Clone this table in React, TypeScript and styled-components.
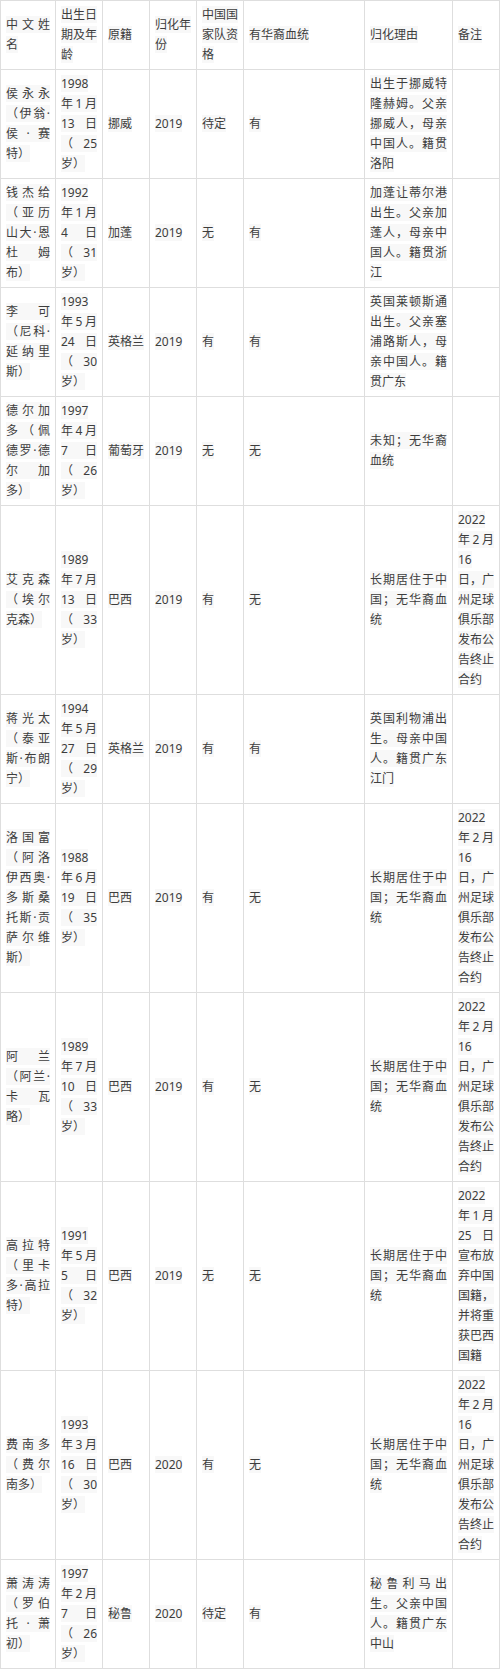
import styled, { createGlobalStyle } from "styled-components";

const GlobalStyle = createGlobalStyle`
  html, body {
    margin: 0;
    padding: 0;
    background: #ffffff;
  }
  body {
    font-family: "Noto Sans", "Noto Sans CJK SC", sans-serif;
  }
`;

const Table = styled.table`
  table-layout: fixed;
  width: 500px;
  border-collapse: separate;
  border-spacing: 0;
  border-left: 1px solid #dedede;
  border-top: 1px solid #dedede;
  font-size: 12px;
  line-height: 20px;
  color: #3d3d3d;
`;

const Cell = styled.td`
  box-sizing: border-box;
  padding: 4px 5px;
  border-right: 1px solid #dedede;
  border-bottom: 1px solid #dedede;
  vertical-align: middle;
  text-align: justify;
  text-spacing-trim: space-all;
  word-break: normal;
  overflow-wrap: normal;
  font-weight: normal;
  line-height: 20px;

  span {
    background: #f8f8f8;
  }
`;

interface Player {
  name: string;
  birth: string;
  origin: string;
  year: string;
  team: string;
  blood: string;
  reason: string;
  note: string;
}

const note1 = "2022年2月16日，广州足球俱乐部发布公告终止合约";

const players: Player[] = [
  {
    name: "侯永永（伊翁·侯·赛特）",
    birth: "1998年1月13日（25岁）",
    origin: "挪威",
    year: "2019",
    team: "待定",
    blood: "有",
    reason: "出生于挪威特隆赫姆。父亲挪威人，母亲中国人。籍贯洛阳",
    note: "",
  },
  {
    name: "钱杰给（亚历山大·恩杜姆布）",
    birth: "1992年1月4日（31岁）",
    origin: "加蓬",
    year: "2019",
    team: "无",
    blood: "有",
    reason: "加蓬让蒂尔港出生。父亲加蓬人，母亲中国人。籍贯浙江",
    note: "",
  },
  {
    name: "李可（尼科·延纳里斯）",
    birth: "1993年5月24日（30岁）",
    origin: "英格兰",
    year: "2019",
    team: "有",
    blood: "有",
    reason: "英国莱顿斯通出生。父亲塞浦路斯人，母亲中国人。籍贯广东",
    note: "",
  },
  {
    name: "德尔加多（佩德罗·德尔加多）",
    birth: "1997年4月7日（26岁）",
    origin: "葡萄牙",
    year: "2019",
    team: "无",
    blood: "无",
    reason: "未知；无华裔血统",
    note: "",
  },
  {
    name: "艾克森（埃尔克森）",
    birth: "1989年7月13日（33岁）",
    origin: "巴西",
    year: "2019",
    team: "有",
    blood: "无",
    reason: "长期居住于中国；无华裔血统",
    note: note1,
  },
  {
    name: "蒋光太（泰亚斯·布朗宁）",
    birth: "1994年5月27日（29岁）",
    origin: "英格兰",
    year: "2019",
    team: "有",
    blood: "有",
    reason: "英国利物浦出生。母亲中国人。籍贯广东江门",
    note: "",
  },
  {
    name: "洛国富（阿洛伊西奥·多斯桑托斯·贡萨尔维斯）",
    birth: "1988年6月19日（35岁）",
    origin: "巴西",
    year: "2019",
    team: "有",
    blood: "无",
    reason: "长期居住于中国；无华裔血统",
    note: note1,
  },
  {
    name: "阿兰（阿兰·卡瓦略）",
    birth: "1989年7月10日（33岁）",
    origin: "巴西",
    year: "2019",
    team: "有",
    blood: "无",
    reason: "长期居住于中国；无华裔血统",
    note: note1,
  },
  {
    name: "高拉特（里卡多·高拉特）",
    birth: "1991年5月5日（32岁）",
    origin: "巴西",
    year: "2019",
    team: "无",
    blood: "无",
    reason: "长期居住于中国；无华裔血统",
    note: "2022年1月25日宣布放弃中国国籍，并将重获巴西国籍",
  },
  {
    name: "费南多（费尔南多）",
    birth: "1993年3月16日（30岁）",
    origin: "巴西",
    year: "2020",
    team: "有",
    blood: "无",
    reason: "长期居住于中国；无华裔血统",
    note: note1,
  },
  {
    name: "萧涛涛（罗伯托·萧初）",
    birth: "1997年2月7日（26岁）",
    origin: "秘鲁",
    year: "2020",
    team: "待定",
    blood: "有",
    reason: "秘鲁利马出生。父亲中国人。籍贯广东中山",
    note: "",
  },
];

const headers = [
  "中文姓名",
  "出生日期及年龄",
  "原籍",
  "归化年份",
  "中国国家队资格",
  "有华裔血统",
  "归化理由",
  "备注",
];

const widths = [55, 47, 47, 47, 47, 121, 88, 47];

function Text({ value }: { value: string }) {
  if (!value) return null;
  return <span>{value}</span>;
}

export default function App() {
  return (
    <>
      <GlobalStyle />
      <Table>
        <colgroup>
          {widths.map((w, i) => (
            <col key={i} style={{ width: w }} />
          ))}
        </colgroup>
        <thead>
          <tr>
            {headers.map((h) => (
              <Cell as="th" key={h}>
                <Text value={h} />
              </Cell>
            ))}
          </tr>
        </thead>
        <tbody>
          {players.map((p) => (
            <tr key={p.name}>
              <Cell>
                <Text value={p.name} />
              </Cell>
              <Cell>
                <Text value={p.birth} />
              </Cell>
              <Cell>
                <Text value={p.origin} />
              </Cell>
              <Cell>
                <Text value={p.year} />
              </Cell>
              <Cell>
                <Text value={p.team} />
              </Cell>
              <Cell>
                <Text value={p.blood} />
              </Cell>
              <Cell>
                <Text value={p.reason} />
              </Cell>
              <Cell>
                <Text value={p.note} />
              </Cell>
            </tr>
          ))}
        </tbody>
      </Table>
    </>
  );
}
